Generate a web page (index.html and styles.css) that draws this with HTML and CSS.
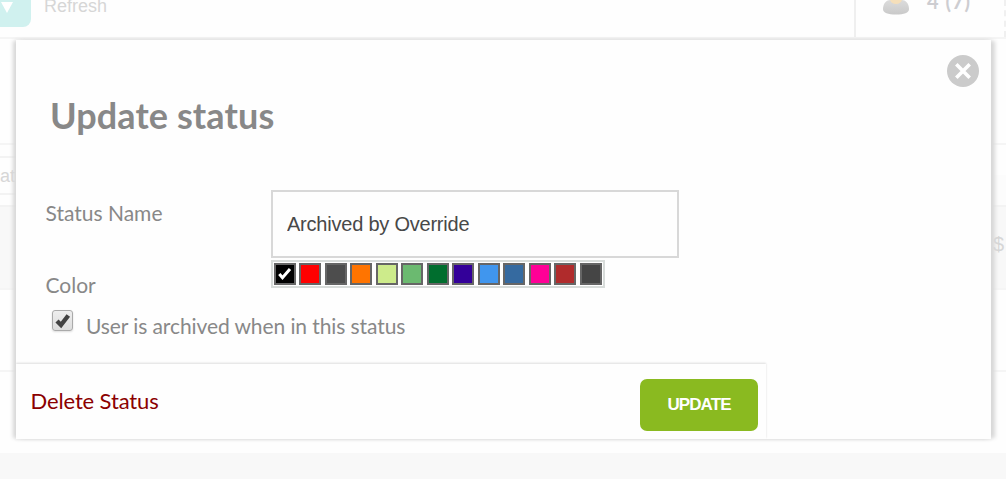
FILE: index.html
```html
<!DOCTYPE html>
<html>
  <head>
    <meta charset="utf-8" />
    <title>Update status</title>
    <meta name="viewport" content="width=device-width, initial-scale=1" />
    <link rel="stylesheet" href="styles.css">
  </head>

  <body>
    <div class="page">
      <div class="topbar">
        <div class="dropdown">
          <svg width="12" height="11" viewBox="0 0 12 11"><path d="M0 0H12L6 11Z" fill="#fff" /></svg>
        </div>
        <span class="refresh">Refresh</span>
        <div class="users">
          <svg class="user-icon" width="28" height="15" viewBox="0 0 28 15">
            <defs>
              <linearGradient id="shirt" x1="0" y1="0" x2="0" y2="1">
                <stop offset="0" stop-color="#dcdcdc" />
                <stop offset="1" stop-color="#c9c9c9" />
              </linearGradient>
            </defs>
            <path d="M1 9C1 3 5 0 8 0H20C23 0 27 3 27 9C27 13 22 14.500 14 14.500S1 13 1 9Z" fill="url(#shirt)" />
            <path d="M8 0H20C19 2.500 17 4 14 4S9 2.500 8 0Z" fill="#f5dfba" />
          </svg>
          <span class="count">4 (7)</span>
        </div>
      </div>
      <div class="filters"></div>
      <div class="table-head">
        <div class="search">at</div>
        <div class="head-end"></div>
      </div>
      <div class="row row-shaded">$</div>
      <div class="row"></div>
      <div class="space"></div>
      <div class="footer"></div>
    </div>

    <div class="modal">
      <button class="close" aria-label="Close">
        <svg width="32" height="32" viewBox="0 0 32 32">
          <circle cx="16" cy="16" r="16" fill="#cbcbcb" />
          <path d="M9.300 9.300L22.700 22.700M22.700 9.300L9.300 22.700" stroke="#fff" stroke-width="3.600" />
        </svg>
      </button>
      <h1>Update status</h1>
      <div class="field">
        <label class="name-label">Status Name</label>
        <input class="name" type="text" value="Archived by Override" />
      </div>
      <div class="field">
        <label class="color-label">Color</label>
        <div class="colors">
          <div class="swatch black">
            <svg width="18" height="18" viewBox="0 0 18 18"><path d="M3.300 9L6.500 12.800L14 4" fill="none" stroke="#fff" stroke-width="3" /></svg>
          </div>
          <div class="swatch red"></div>
          <div class="swatch gray"></div>
          <div class="swatch orange"></div>
          <div class="swatch lime"></div>
          <div class="swatch sage"></div>
          <div class="swatch green"></div>
          <div class="swatch indigo"></div>
          <div class="swatch sky"></div>
          <div class="swatch steel"></div>
          <div class="swatch pink"></div>
          <div class="swatch brick"></div>
          <div class="swatch charcoal"></div>
        </div>
      </div>
      <div class="archived">
        <span class="checkbox">
          <svg width="17" height="17" viewBox="0 0 17 17"><path d="M3 9L7 13L14.300 3.500" fill="none" stroke="#424242" stroke-width="4.400" /></svg>
        </span>
        <label>User is archived when in this status</label>
      </div>
      <div class="actions">
        <a class="delete">Delete Status</a>
        <button class="update">UPDATE</button>
      </div>
    </div>
  </body>
</html>
```
FILE: styles.css
```css
* {
  box-sizing: border-box;
}

body {
  margin: 0;
  height: 479px;
  overflow: hidden;
  background: #fefefe;
  font-family: Lato, sans-serif;
  color: #888;
}

.page {
  font-family: "Liberation Sans", Arial, sans-serif;
  color: #d6d6d6;
}

.topbar {
  display: flex;
  height: 39px;
  border-bottom: 2px solid #f5f5f5;
}

.dropdown {
  width: 31px;
  height: 27px;
  padding: 2px 0 0 1px;
  background: #d0f1ef;
  border-radius: 0 0 8px 0;
  line-height: 0;
}

.refresh {
  margin: -4px 0 0 13px;
  font-size: 18px;
  line-height: 21px;
}

.users {
  display: flex;
  width: 152px;
  margin-left: auto;
  padding-left: 26px;
  border-left: 2px solid #efefef;
  border-right: 2px dashed #f0f0f0;
}

.count {
  margin: -10px 0 0 17px;
  font: bold 20px/22px Lato, sans-serif;
  letter-spacing: 1px;
  color: #cdcdd1;
}

.filters {
  height: 106px;
  border-bottom: 2px solid #f5f5f5;
}

.table-head {
  display: flex;
  justify-content: space-between;
  height: 62px;
  padding-top: 11px;
  border-bottom: 2px solid #f3f3f3;
}

.search {
  width: 200px;
  height: 39px;
  border: 2px solid #f3f3f3;
  border-left: none;
  font-size: 18px;
  line-height: 36px;
}

.head-end {
  width: 200px;
  height: 30px;
  margin-top: 19px;
  background: #fcfcfc;
}

.row {
  height: 82px;
  border-bottom: 2px solid #f5f5f5;
}

.row-shaded {
  height: 83px;
  padding: 26px 2px 0 0;
  background: #f8f8f8;
  font-size: 20px;
  line-height: 22px;
  text-align: right;
}

.space {
  height: 81px;
}

.footer {
  height: 26px;
  background: #f8f8f8;
}

/* lies over the page */
.modal {
  position: absolute;
  top: 40px;
  left: 16px;
  width: 975px;
  height: 399px;
  background: #fefefe;
  box-shadow: 5px 0 4px -1px #d8d8d8, -4px 0 4px -1px #d8d8d8, 0 0 4px #e2e2e2;
}

.close {
  position: absolute;
  top: 15px;
  right: 12px;
  padding: 0;
  border: none;
  background: none;
  line-height: 0;
}

h1 {
  height: 150px;
  margin: 0;
  padding: 53px 0 0 34px;
  font-size: 36px;
  font-weight: bold;
  line-height: 44px;
  letter-spacing: 0.1px;
}

.field {
  display: flex;
  padding-left: 29.5px;
  font-size: 21px;
  line-height: 26px;
}

.field label {
  width: 225.5px;
}

.name-label {
  padding-top: 10px;
}

.color-label {
  padding-top: 12px;
}

.name {
  width: 408px;
  height: 68px;
  margin-bottom: 2px;
  padding: 0 14px;
  border: 2px solid #d8d8d8;
  background: #fefefe;
  color: #484848;
  font-family: "Liberation Sans", Arial, sans-serif;
  font-size: 20px;
  letter-spacing: -0.22px;
}

.colors {
  display: flex;
  gap: 3.5px;
  width: 334px;
  height: 28px;
  padding: 1px 0.9px;
  border: 2px solid #d8dcda;
}

.swatch {
  flex: none;
  width: 22px;
  height: 22px;
  border: 2px solid #666;
  line-height: 0;
}

.black { background: #000; }
.red { background: #f00; }
.gray { background: #4d4d4d; }
.orange { background: #ff7400; }
.lime { background: #cdeb8b; }
.sage { background: #6bba70; }
.green { background: #006e2e; }
.indigo { background: #330099; }
.sky { background: #4096ee; }
.steel { background: #356aa0; }
.pink { background: #ff0096; }
.brick { background: #b02b2c; }
.charcoal { background: #454545; }

.archived {
  display: flex;
  height: 66px;
  padding: 1px 0 0 36px;
  font-size: 21px;
  line-height: 26px;
}

.archived label {
  margin: 14px 0 0 13px;
  letter-spacing: -0.09px;
}

.checkbox {
  width: 21px;
  height: 21px;
  margin-top: 11px;
  padding: 1px;
  border: 1px solid #aaa;
  border-radius: 3px;
  background: linear-gradient(#eee, #dcdcdc);
  box-shadow: 0 1px 2px #ddd;
  line-height: 0;
}

.actions {
  display: flex;
  justify-content: space-between;
  width: 750px;
  height: 75px;
  padding: 15px 8px 0 14.500px;
  box-shadow: 0 -1px 2px #ddd;
  clip-path: inset(-4px -4px 0 0);
}

.delete {
  padding-top: 8px;
  color: #8b0000;
  font-size: 22px;
  line-height: 27px;
  letter-spacing: -0.13px;
}

.update {
  width: 118px;
  height: 52px;
  padding: 0;
  border: none;
  border-radius: 7px;
  background: #8aba20;
  color: #fff;
  font: bold 17px "Liberation Sans", Arial, sans-serif;
  letter-spacing: -0.9px;
}
```
